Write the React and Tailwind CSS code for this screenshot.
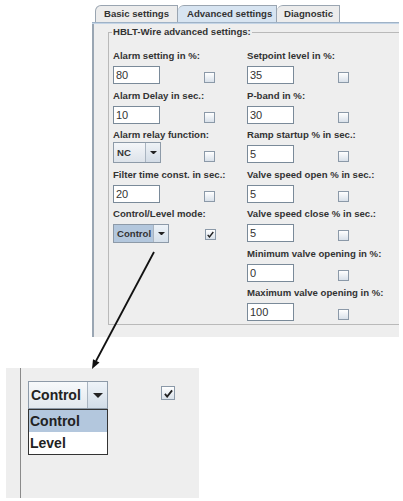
import React from "react";

const rows = [
  [
    { label: "Alarm setting in %:", type: "input", value: "80" },
    { label: "Setpoint level in %:", type: "input", value: "35" },
  ],
  [
    { label: "Alarm Delay in sec.:", type: "input", value: "10" },
    { label: "P-band in %:", type: "input", value: "30" },
  ],
  [
    { label: "Alarm relay function:", type: "nc" },
    { label: "Ramp startup % in sec.:", type: "input", value: "5" },
  ],
  [
    { label: "Filter time const. in sec.:", type: "input", value: "20" },
    { label: "Valve speed open % in sec.:", type: "input", value: "5" },
  ],
  [
    { label: "Control/Level mode:", type: "control" },
    { label: "Valve speed close % in sec.:", type: "input", value: "5" },
  ],
  [null, { label: "Minimum valve opening in %:", type: "input", value: "0" }],
  [null, { label: "Maximum valve opening in %:", type: "input", value: "100" }],
];

function CheckBox({ checked, big }) {
  return (
    <span
      className={`flex items-center justify-center border border-[#8b99a8] bg-gradient-to-b from-white to-[#d9e1ea] ${
        big ? "w-[14px] h-[14px]" : "w-[11px] h-[11px]"
      }`}
    >
      {checked && (
        <svg viewBox="0 0 10 10" className={big ? "w-[9px] h-[9px]" : "w-[7px] h-[7px]"}>
          <path d="M1 5.5 L3.5 8.5 L9 1.5" fill="none" stroke="#222" strokeWidth="2" />
        </svg>
      )}
    </span>
  );
}

function Arrow({ size = 7 }) {
  return (
    <svg viewBox="0 0 8 4" style={{ width: size, height: size / 2 }}>
      <path d="M0 0 H8 L4 4 Z" fill="#222" />
    </svg>
  );
}

function Control({ cell }) {
  if (cell.type === "input") {
    return (
      <>
        <div className="w-[47px] h-[18px] bg-white border border-[#7a8a99] pl-[2px] text-[11px] leading-[16px] text-[#333]">
          {cell.value}
        </div>
        <div className="ml-[44px] mt-[6px]">
          <CheckBox />
        </div>
      </>
    );
  }
  if (cell.type === "nc") {
    return (
      <>
        <div className="-mt-[3px] flex w-[48px] h-[21px] border border-[#8d9aa8]">
          <div className="w-[31px] bg-gradient-to-b from-[#f4f6f9] to-[#dde3ea] pl-[3px] text-[9.6px] font-bold leading-[19px] text-[#333]">
            NC
          </div>
          <div className="flex-1 flex items-center justify-center border-l border-[#a9b4c0] bg-gradient-to-b from-[#eef2f6] to-[#d3dce6]">
            <Arrow />
          </div>
        </div>
        <div className="ml-[43px] mt-[6px]">
          <CheckBox />
        </div>
      </>
    );
  }
  return (
    <>
      <div className="flex w-[56px] h-[19px] border border-[#8d9aa8]">
        <div className="w-[39px] bg-[#b3c7dd] pl-[3px] text-[9.6px] font-bold leading-[17px] text-[#333]">
          Control
        </div>
        <div className="flex-1 flex items-center justify-center border-l border-[#a9b4c0] bg-gradient-to-b from-[#eef3f8] to-[#d5e0eb]">
          <Arrow />
        </div>
      </div>
      <div className="ml-[36px] mt-[5px]">
        <CheckBox checked />
      </div>
    </>
  );
}

function Cell({ cell }) {
  if (!cell) return <div />;
  return (
    <div className="flex flex-col">
      <div className="h-[14px] leading-[14px] text-[9.6px] font-bold text-[#333] whitespace-nowrap">
        {cell.label}
      </div>
      <div className="mt-[3px] h-[18px] flex items-start">
        <Control cell={cell} />
      </div>
    </div>
  );
}

export default function App() {
  return (
    <div
      className="relative w-[403px] h-[501px] bg-white overflow-hidden"
      style={{ fontFamily: '"Liberation Sans", Arial, sans-serif' }}
    >
      {/* top panel */}
      <div className="ml-[92px] mt-[5px] w-[307px] h-[332px] flex flex-col">
        <div className="h-[17px] flex items-end pl-[3px]">
          <div className="h-[17px] w-[83px] border border-b-0 border-[#9aa5b1] rounded-tl-[6px] bg-[#ececec] pl-[8px] text-[9.6px] font-bold leading-[16px] text-[#333]">
            Basic settings
          </div>
          <div className="h-[17px] w-[99px] border border-b-0 border-l-0 border-[#9aa5b1] rounded-tl-[6px] bg-[#d7e4f1] pl-[9px] text-[9.6px] font-bold leading-[16px] text-[#333]">
            Advanced settings
          </div>
          <div className="h-[17px] w-[63px] border border-b-0 border-l-0 border-[#9aa5b1] rounded-tl-[6px] bg-[#ececec] pl-[7px] text-[9.6px] font-bold leading-[16px] text-[#333]">
            Diagnostic
          </div>
        </div>
        <div className="h-[2px] bg-[#c3d4e6] border-t border-[#9fb2c6]" />
        <div className="flex-1 bg-[#eeeeee] border-l-2 border-[#9aa6b3] pt-[1px] pl-[14px]">
          <fieldset className="border border-r-0 border-[#b9b9b9] pl-[4px] pt-[10px] pb-[2px] h-[300px]">
            <legend className="ml-[-1px] px-[1px] h-[14px] leading-[14px] text-[9.6px] font-bold text-[#333]">
              HBLT-Wire advanced settings:
            </legend>
            <div className="flex flex-col">
              {rows.map((r, i) => (
                <div
                  key={i}
                  className={`grid grid-cols-[134px_1fr] ${i < rows.length - 1 ? "h-[39.5px]" : ""}`}
                >
                  <Cell cell={r[0]} />
                  <Cell cell={r[1]} />
                </div>
              ))}
            </div>
          </fieldset>
        </div>
      </div>

      {/* zoomed detail */}
      <div className="mt-[31px] ml-[6px] w-[193px] h-[130px] bg-[#eeeeee] flex">
        <div className="w-[14px]" />
        <div className="w-[1px] bg-[#8a8a8a]" />
        <div className="pl-[7px] pt-[13px] flex items-start">
          <div className="flex flex-col">
            <div className="flex w-[80px] h-[28px] border border-[#8d9aa8]">
              <div className="w-[58px] bg-gradient-to-b from-[#f7f9fb] to-[#e2e8ee] pl-[2px] text-[14px] font-bold leading-[26px] text-[#222]">
                Control
              </div>
              <div className="flex-1 flex items-center justify-center border-l border-[#a9b4c0] bg-gradient-to-b from-[#eef3f8] to-[#d2dde8]">
                <Arrow size={10} />
              </div>
            </div>
            <div className="w-[80px] border border-[#333] bg-white text-[14px] font-bold text-[#222]">
              <div className="h-[22px] leading-[22px] bg-[#b3c7dd] pl-[1px]">Control</div>
              <div className="h-[22px] leading-[22px] pl-[1px]">Level</div>
            </div>
          </div>
          <div className="ml-[53px] mt-[5px]">
            <CheckBox checked big />
          </div>
        </div>
      </div>

      {/* pointer arrow */}
      <svg className="absolute left-0 top-0 w-[403px] h-[501px] pointer-events-none" viewBox="0 0 403 501">
        <line x1="154" y1="252" x2="96" y2="361" stroke="#111" strokeWidth="1.8" />
        <polygon points="92,369 99.5,362.6 93,359.2" fill="#111" />
      </svg>
    </div>
  );
}
